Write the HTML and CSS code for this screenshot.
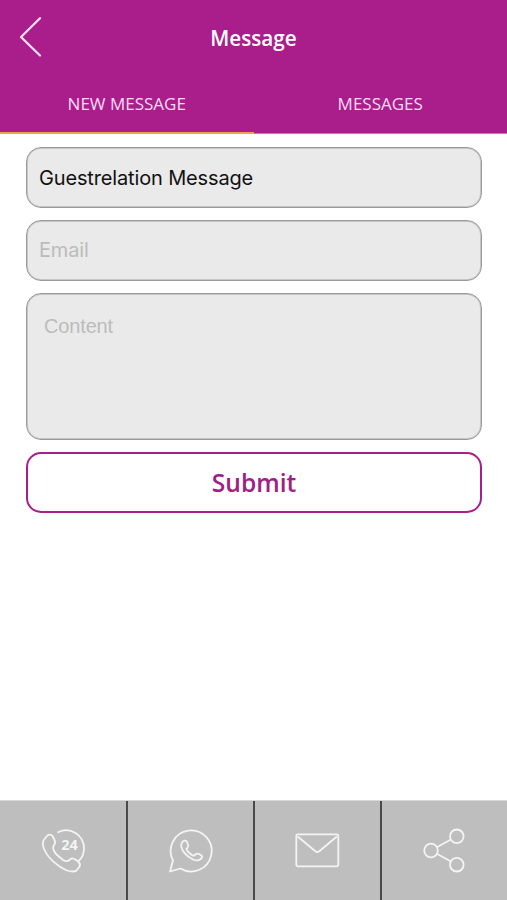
FILE: index.html
```html
<!DOCTYPE html>
<html lang="en">
<head>
    <meta charset="UTF-8">
    <meta name="viewport" content="width=device-width, initial-scale=1.0">
    <title>Message</title>
    <link rel="stylesheet" href="styles.css">
</head>
<body>
    <header class="header">
        <div class="title-bar">
            <a class="back" href="#" aria-label="Back">
                <svg width="24" height="42" viewBox="0 0 24 42"><path d="M21 1.2 L2 20 L21 38.5"/></svg>
            </a>
            <h1>Message</h1>
        </div>
        <nav class="tabs">
            <a class="tab active" href="#">NEW MESSAGE</a>
            <a class="tab" href="#">MESSAGES</a>
        </nav>
    </header>

    <form class="form">
        <input class="field" type="text" value="Guestrelation Message" aria-label="Subject">
        <input class="field email" type="email" placeholder="Email">
        <textarea class="field content" placeholder="Content"></textarea>
        <button class="submit" type="button">Submit</button>
    </form>

    <footer class="toolbar">
        <a class="tool" href="#" aria-label="Call">
            <svg width="48" height="48" viewBox="0 0 48 48">
                <path d="M19 5.2 C31 -1 45 8 45 21.5 C45 27 43 31 39.5 34"/>
                <path d="M5 12.5 L8.5 8.5 Q11 6.5 13.5 9 L15.5 13 Q17 16 15 18 C13 20.5 14 23 17 27 L24 33 C27 35 29 34.5 31 32.5 Q33 30.5 35.5 32 L39 34.5 Q42 37 40.5 39.5 L37.5 43.5 Q35 45.5 28 43.5 C19 40 9 31 5.5 23 Q2.5 16 5 12.5 Z"/>
                <text x="22.2" y="23">24</text>
            </svg>
        </a>
        <a class="tool" href="#" aria-label="WhatsApp">
            <svg width="48" height="48" viewBox="1 0 48 48">
                <path d="M4 44.5 L7 33.5 A20.5 20.5 0 1 1 14.5 41.5 Z"/>
                <path d="M15.5 16.5 C17 13 20 13 21 15 L22.2 18.5 Q22.5 20 20.5 22 Q20.5 24 26.5 28.5 Q28 29 29.5 27.3 Q31 26 33 27 L35.5 28.5 Q37 30 34.5 32.3 Q31.5 34.5 27 32.5 C20.5 29.5 14 22.5 15.5 16.5 Z"/>
            </svg>
        </a>
        <a class="tool" href="#" aria-label="Mail">
            <svg width="48" height="48" viewBox="0 0 48 48">
                <rect x="2.3" y="7.3" width="42" height="32" rx="1.5"/>
                <path d="M4.3 10 L21.3 24.2 Q23.3 25.8 25.3 24.2 L42.3 10"/>
            </svg>
        </a>
        <a class="tool" href="#" aria-label="Share">
            <svg width="48" height="48" viewBox="0 0 48 48">
                <circle cx="10" cy="23.5" r="6.8"/>
                <circle cx="35.8" cy="9.3" r="6.8"/>
                <circle cx="35.8" cy="37.7" r="6.8"/>
                <path d="M16.3 20 L29.5 12.7 M16.3 27 L29.5 34.3"/>
            </svg>
        </a>
    </footer>
</body>
</html>
```

FILE: styles.css
```css
* {
    margin: 0;
    padding: 0;
    box-sizing: border-box;
}

body {
    display: flex;
    flex-direction: column;
    height: 100vh;
    overflow: hidden;
    background-color: #fff;
    font-family: "Open Sans", sans-serif;
}

a {
    color: inherit;
    text-decoration: none;
}

svg {
    display: block;
    fill: none;
    stroke: #f4f4f4;
    stroke-width: 1.8;
    stroke-linecap: round;
    stroke-linejoin: round;
}

/* Header */
.header {
    height: 134px;
    background-color: #aa1e8c;
    color: #fff;
}

.title-bar {
    display: grid;
    grid-template-columns: 60px 1fr 60px;
    align-items: center;
    height: 75px;
}

.back {
    padding-left: 19px;
}

.back svg {
    stroke: #fbe3f6;
    stroke-width: 2.2;
}

h1 {
    text-align: center;
    font-size: 20.7px;
    font-weight: 600;
}

.tabs {
    display: flex;
    height: 59px;
}

.tab {
    flex: 1;
    padding-top: 17px;
    border-bottom: 1px solid #c873b6;
    text-align: center;
    font-size: 17px;
    line-height: 24px;
    color: #fbdcf4;
}

.tab.active {
    border-bottom: 2px solid #efa052;
}

/* Form */
.form {
    flex: 1;
    display: flex;
    flex-direction: column;
    gap: 12px;
    padding: 13px 25px 0 26px;
}

.field {
    height: 61px;
    padding: 0 12px;
    border: 1px solid #9a9a9a;
    border-radius: 15px;
    background-color: #eaeaea;
    box-shadow: inset 0 0 0 1px #c6c6c6;
    color: #111;
    font-family: Inter, sans-serif;
    font-size: 20px;
    letter-spacing: -0.15px;
    outline: none;
}

.field::placeholder {
    color: #bcbcbc;
}

.email {
    padding-bottom: 2px;
}

.content {
    height: 147px;
    padding: 21px 17px;
    font-family: "Liberation Sans", sans-serif;
    resize: none;
}

.submit {
    height: 61px;
    border: 2px solid #aa1e8c;
    border-radius: 15px;
    background-color: #fff;
    color: #a02085;
    font-family: inherit;
    font-size: 24.6px;
    font-weight: 600;
}

/* Bottom toolbar */
.toolbar {
    display: grid;
    grid-template-columns: 128px 127px 127px 1fr;
    height: 100px;
    border-top: 1px solid #d8d8d8;
    background-color: #bebebe;
}

.tool {
    display: flex;
    justify-content: center;
    align-items: center;
    padding-top: 1px;
    border-right: 2px solid #4a4a4a;
}

.tool:last-child {
    border-right: none;
}

.tool text {
    fill: #f4f4f4;
    stroke: none;
    font-size: 14.5px;
    font-weight: 700;
}
```
